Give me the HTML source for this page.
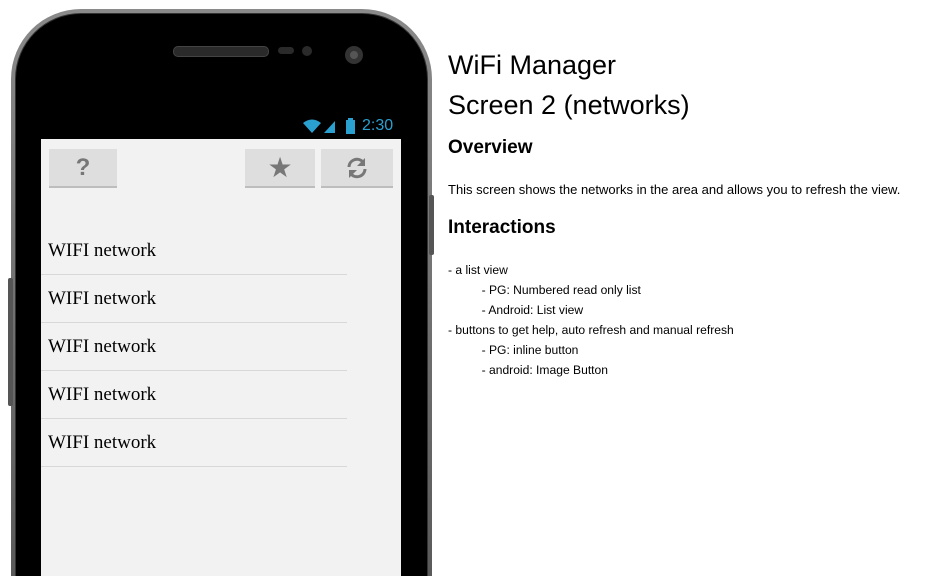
<!DOCTYPE html>
<html style="height:576px;overflow:hidden"><head><style>
body{margin:0;width:946px;height:576px;background:#fff;position:relative;overflow:hidden;font-family:"Liberation Sans",sans-serif}
.phone{position:absolute;left:11px;top:9px;width:421px;height:567px;border-radius:70px 70px 0 0;background:linear-gradient(#8a8a8a,#5a5a5a);}
.inner{position:absolute;left:4px;top:4px;right:4px;bottom:0;border-radius:66px 66px 0 0;background:#000;border:1px solid #333;border-bottom:none}
.screen{position:absolute;left:41px;top:139px;width:360px;height:437px;background:#f2f2f2}
.btn{position:absolute;top:149px;height:37px;background:#dedede;border-bottom:2px solid #bdbdbd;display:flex;align-items:center;justify-content:center;color:#777}
.row{position:absolute;left:41px;width:306px;height:47px;border-bottom:1px solid #d8d8d8;font-family:"Liberation Serif",serif;font-size:19px;color:#000}
.row span{position:absolute;left:7px;top:13px}
.r{position:absolute;left:448px;color:#000}
</style></head><body>
<div class="phone"><div class="inner"></div></div>
<div style="position:absolute;left:8px;top:278px;width:5px;height:128px;background:#555;border-radius:2px"></div>
<div style="position:absolute;left:429px;top:195px;width:5px;height:60px;background:#555;border-radius:2px"></div>
<div style="position:absolute;left:173px;top:46px;width:94px;height:9px;border-radius:5px;background:#2a2a2a;border:1px solid #444"></div>
<div style="position:absolute;left:278px;top:47px;width:16px;height:7px;border-radius:4px;background:#2a2a2a"></div>
<div style="position:absolute;left:302px;top:46px;width:10px;height:10px;border-radius:5px;background:#2a2a2a"></div>
<div style="position:absolute;left:345px;top:46px;width:18px;height:18px;border-radius:9px;background:#333"><div style="margin:5px;width:8px;height:8px;border-radius:4px;background:#555"></div></div>
<svg style="position:absolute;left:302px;top:118px" width="60" height="16" viewBox="0 0 60 16">
<path d="M1 5 Q10 -2 19 5 L10 15 Z" fill="#2aa0d0"/>
<path d="M22 15 L33 3 L33 15 Z" fill="#2aa0d0"/>
<rect x="44" y="2" width="9" height="14" fill="#2aa0d0"/><rect x="46" y="0" width="5" height="2" fill="#2aa0d0"/>
</svg>
<div style="position:absolute;left:362px;top:117px;color:#2aa0d0;font-size:16px">2:30</div>
<div class="screen"></div>
<div class="btn" style="left:49px;width:68px;font-size:24px;font-weight:bold">?</div>
<div class="btn" style="left:245px;width:70px;font-size:28px">★</div>
<div class="btn" style="left:321px;width:72px"><svg width="24" height="24" viewBox="0 0 24 24"><path d="M4 11 A8 8 0 0 1 18 6" stroke="#777" stroke-width="3" fill="none"/><path d="M20 2 L20 10 L12 10 Z" fill="#777"/><path d="M20 13 A8 8 0 0 1 6 18" stroke="#777" stroke-width="3" fill="none"/><path d="M4 22 L4 14 L12 14 Z" fill="#777"/></svg></div>
<div class="row" style="top:227px"><span>WIFI network</span></div>
<div class="row" style="top:275px"><span>WIFI network</span></div>
<div class="row" style="top:323px"><span>WIFI network</span></div>
<div class="row" style="top:371px"><span>WIFI network</span></div>
<div class="row" style="top:419px"><span>WIFI network</span></div>
<div class="r" style="top:50px;font-size:27px">WiFi Manager</div>
<div class="r" style="top:90px;font-size:27px">Screen 2 (networks)</div>
<div class="r" style="top:137px;font-size:19px;font-weight:bold">Overview</div>
<div class="r" style="top:182px;font-size:13px">This screen shows the networks in the area and allows you to refresh the view.</div>
<div class="r" style="top:217px;font-size:19px;font-weight:bold">Interactions</div>
<div class="r" style="top:260px;font-size:12.1px;line-height:20px">- a list view<br>&nbsp;&nbsp;&nbsp;&nbsp;&nbsp;&nbsp;&nbsp;&nbsp;&nbsp;&nbsp;- PG: Numbered read only list<br>&nbsp;&nbsp;&nbsp;&nbsp;&nbsp;&nbsp;&nbsp;&nbsp;&nbsp;&nbsp;- Android: List view<br>- buttons to get help, auto refresh and manual refresh<br>&nbsp;&nbsp;&nbsp;&nbsp;&nbsp;&nbsp;&nbsp;&nbsp;&nbsp;&nbsp;- PG: inline button<br>&nbsp;&nbsp;&nbsp;&nbsp;&nbsp;&nbsp;&nbsp;&nbsp;&nbsp;&nbsp;- android: Image Button</div>
</body></html>
